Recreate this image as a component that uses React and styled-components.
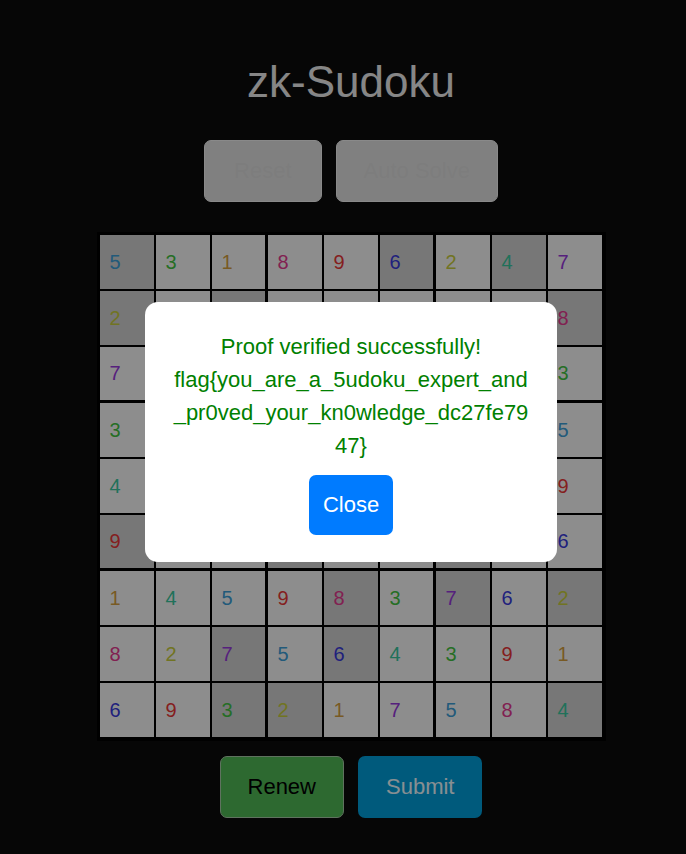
import React from 'react';
import styled, { createGlobalStyle } from 'styled-components';

const GlobalStyle = createGlobalStyle`
  html, body {
    margin: 0;
    padding: 0;
    background: #0a0a0a;
    font-family: "Liberation Sans", Arial, sans-serif;
  }
`;

const solution = [
    [5, 3, 1, 8, 9, 6, 2, 4, 7],
    [2, 6, 4, 3, 7, 1, 9, 5, 8],
    [7, 8, 9, 4, 2, 5, 6, 1, 3],
    [3, 1, 2, 6, 4, 9, 8, 7, 5],
    [4, 5, 6, 7, 3, 8, 1, 2, 9],
    [9, 7, 8, 1, 5, 2, 4, 3, 6],
    [1, 4, 5, 9, 8, 3, 7, 6, 2],
    [8, 2, 7, 5, 6, 4, 3, 9, 1],
    [6, 9, 3, 2, 1, 7, 5, 8, 4],
];

// 1 = given (darker) cell
const given = [
    [1, 0, 0, 0, 0, 1, 0, 1, 0],
    [1, 0, 1, 0, 0, 0, 0, 0, 1],
    [0, 1, 0, 0, 1, 0, 1, 0, 0],
    [0, 0, 1, 1, 0, 0, 0, 1, 0],
    [0, 1, 0, 0, 0, 1, 0, 0, 0],
    [1, 0, 0, 1, 0, 0, 1, 0, 0],
    [0, 0, 0, 0, 1, 0, 1, 0, 1],
    [0, 0, 1, 0, 1, 0, 0, 0, 0],
    [0, 0, 1, 1, 0, 0, 0, 0, 1],
];

const digitColors = {
    1: '#c9963c',
    2: '#bcc23a',
    3: '#3eb83e',
    4: '#36bc96',
    5: '#3a96cc',
    6: '#3636d0',
    7: '#9036d0',
    8: '#d83688',
    9: '#dc3434',
};

const Page = styled.div`
  box-sizing: border-box;
  min-height: 854px;
  padding-left: 16px;
  display: flex;
  flex-direction: column;
  align-items: center;
`;

const Title = styled.h1`
  margin: 57px 0 0;
  font-size: 44px;
  font-weight: 400;
  color: #e0e0e0;
`;

const Toolbar = styled.div`
  display: flex;
  gap: 14px;
  margin-top: ${props => props.top}px;
`;

const Button = styled.button`
  box-sizing: border-box;
  height: 62px;
  padding: 0 ${props => props.pad || 27}px;
  border-radius: 7px;
  border: 1px solid ${props => props.border || 'transparent'};
  background: ${props => props.bg};
  color: ${props => props.fg};
  font-family: inherit;
  font-size: 22px;
  cursor: pointer;
`;

const Board = styled.div`
  margin-top: 30px;
  display: grid;
  grid-template-columns: repeat(9, 56px);
  grid-template-rows: repeat(9, 56px);
  border: 2px solid #000;
  border-width: 2px 3px 3px 2px;
  background: #000;
`;

const Cell = styled.div`
  box-sizing: border-box;
  display: flex;
  align-items: center;
  padding-left: 10px;
  border: 1px solid #000;
  border-right-width: ${props => (props.col === 2 || props.col === 5 ? 2 : 1)}px;
  border-bottom-width: ${props => (props.row === 2 || props.row === 5 ? 2 : 1)}px;
  background: ${props => (props.given ? '#c6c6c6' : '#ececec')};
  color: ${props => props.color};
  font-size: 20px;
`;

const Backdrop = styled.div`
  position: fixed;
  inset: 0;
  box-sizing: border-box;
  padding: 10px 0 0 16px;
  background: rgba(0, 0, 0, 0.4);
  display: flex;
  align-items: center;
  justify-content: center;
`;

const Modal = styled.div`
  box-sizing: border-box;
  width: 412px;
  padding: 28px 25px 27px;
  background: #fff;
  border-radius: 13px;
  display: flex;
  flex-direction: column;
  align-items: center;
  gap: 13px;
`;

const Message = styled.p`
  margin: 0;
  width: 100%;
  text-align: center;
  color: #008000;
  font-size: 22px;
  line-height: 33px;
  word-break: break-all;
`;

const CloseButton = styled.button`
  box-sizing: border-box;
  height: 60px;
  padding: 0 14px;
  border: none;
  border-radius: 7px;
  background: #007bff;
  color: #fff;
  font-family: inherit;
  font-size: 22px;
  cursor: pointer;
`;

export default function App() {
    return (
        <>
            <GlobalStyle />
            <Page>
                <Title>zk-Sudoku</Title>
                <Toolbar top={33}>
                    <Button bg="#d6d6d6" fg="#d1d1d1" border="#e4e4e4" pad={29}>Reset</Button>
                    <Button bg="#d6d6d6" fg="#d1d1d1" border="#e4e4e4" pad={27}>Auto Solve</Button>
                </Toolbar>
                <Board>
                    {solution.map((row, r) =>
                        row.map((n, c) => (
                            <Cell
                                key={`${r}-${c}`}
                                row={r}
                                col={c}
                                given={given[r][c]}
                                color={digitColors[n]}
                            >
                                {n}
                            </Cell>
                        ))
                    )}
                </Board>
                <Toolbar top={15}>
                    <Button bg="#4caf50" fg="#000" border="#9fbf9f">Renew</Button>
                    <Button bg="#0096cf" fg="#e2eef4">Submit</Button>
                </Toolbar>
            </Page>
            <Backdrop>
                <Modal>
                    <Message>
                        Proof verified successfully!
                        <br />
                        flag{'{'}you_are_a_5udoku_expert_and_pr0ved_your_kn0wledge_dc27fe7947{'}'}
                    </Message>
                    <CloseButton>Close</CloseButton>
                </Modal>
            </Backdrop>
        </>
    );
}
